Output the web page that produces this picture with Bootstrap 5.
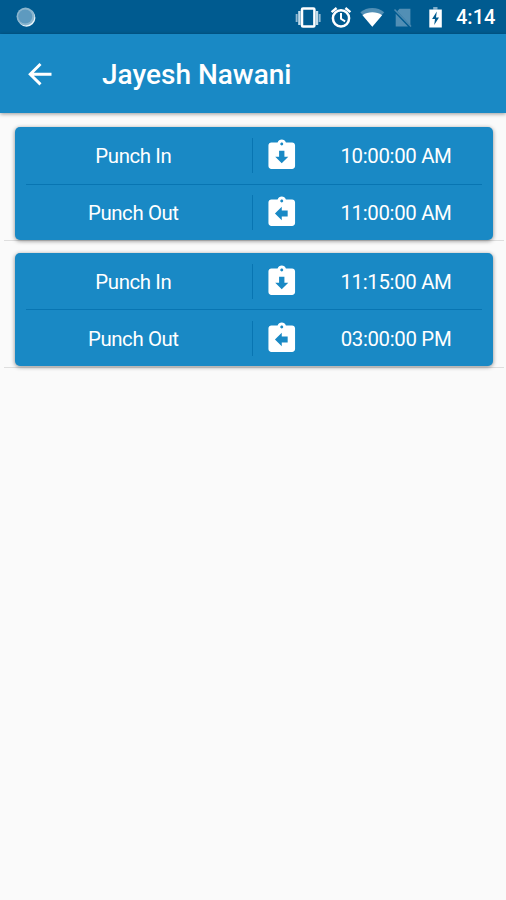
<!DOCTYPE html>
<html lang="en">
<head>
<meta charset="utf-8">
<meta name="viewport" content="width=device-width, initial-scale=1">
<title>Jayesh Nawani</title>
<link href="https://cdn.jsdelivr.net/npm/bootstrap@5.3.0/dist/css/bootstrap.min.css" rel="stylesheet">
<style>
body{background:#fafafa;font-family:Roboto,"Liberation Sans",sans-serif;min-height:900px;overflow:hidden}
.status-bar{height:34px;background:#005b90;padding:0 10px 0 16px}
.status-time{font-size:20px;font-weight:500;line-height:36px;width:40px;margin-left:11px;white-space:nowrap}
.app-bar{height:79px;background:#1989c5;box-shadow:0 1px 4px rgba(0,0,0,.4);padding:0 24px}
.app-title{font-size:28px;font-weight:500;margin-left:46px;line-height:1;padding-top:2px}
.entry-list{padding:14px 2px 0 4px}
.entry{border-bottom:1px solid #dedede;padding:0 11.5px 0 10.5px;margin-bottom:12px;height:114px}
.entry + .entry{height:115px}
.punch-card{height:112.6px;border-radius:5px;background:#1989c5;box-shadow:0 1px 4px rgba(0,0,0,.45);border:0}
.punch-row{height:56.5px;flex-shrink:0}
.punch-row:first-child{height:57px}
.entry:first-child .punch-row + .punch-row{height:57.400px}
.punch-row + .punch-row::before{content:"";height:1px;background:#0875b2;position:absolute;left:11px;right:11px;top:57px}
.entry + .entry .punch-row + .punch-row::before{top:56px}
.punch-label{width:237.6px;font-size:20.4px;letter-spacing:-.4px;padding-top:2px}
.punch-rule{width:1px;height:35px;background:#0875b2}
.punch-icon{width:35.5px;height:35.5px;margin-left:10.7px}
.punch-time{width:193px;font-size:20.4px;letter-spacing:-.33px;padding-top:2px}
</style>
</head>
<body>
<header class="text-white">
  <div class="status-bar d-flex align-items-center justify-content-between">
    <svg width="20" height="20" viewBox="0 0 20 20"><circle cx="10.5" cy="10.8" r="8.9" fill="#e8f5fb"/><circle cx="9.5" cy="9.5" r="9" fill="#8bb5ce"/><circle cx="9.2" cy="9.5" r="7" fill="#5e9abf"/></svg>
    <div class="d-flex align-items-center">
      <svg width="150" height="34" viewBox="295 0 150 34">
        <path d="M295.7 14h1.9v8h-1.9zM318.7 14h1.9v8h-1.9z" fill="#8fb7d1"/>
        <path d="M298.2 11h2.3v14h-2.3zM315.9 11h2.3v14h-2.3z" fill="#c2dbea"/>
        <rect x="302" y="8.4" width="12.4" height="18.2" rx="1" fill="none" stroke="#fff" stroke-width="2.5"/>
        <circle cx="341" cy="18.3" r="8.1" fill="none" stroke="#fff" stroke-width="2.5"/>
        <path d="M331.6 12.2l5-4.2M350.4 12.2l-5-4.2" stroke="#fff" stroke-width="2.4"/>
        <path d="M341 13v5.8l4.1 2.5" fill="none" stroke="#fff" stroke-width="2"/>
        <path d="M360.4 12.2C366.8 6.5 377.8 6.5 384.2 12.2L372.3 26.8z" fill="#528fb5"/>
        <path d="M362.5 15.2C368 11.4 376.6 11.4 382.1 15.2L372.3 26.8z" fill="#fff"/>
        <path d="M399.5 8.8h10.9v16.5L397.2 11.2zM395.7 13.8l12.3 12.6h-12.3z" fill="#528fb5"/>
        <path d="M394.5 9.5l16.5 17" stroke="#4c8ab1" stroke-width="1.5"/>
        <path d="M433.2 7h4.3v2.7h-4.3z" fill="#7faecb"/>
        <path d="M429.3 9.5h12.5v18h-12.5z" fill="#fff"/>
        <path d="M436.8 11.5l-4.7 7.6h2.9l-.8 6 4.8-7.6h-3z" fill="#005b90"/>
      </svg>
      <span class="status-time">4:14</span>
    </div>
  </div>
  <div class="app-bar d-flex align-items-center position-relative">
    <svg width="32" height="32" viewBox="0 0 32 32"><path d="M27.5 16.2H6M16.5 6L6.2 16.2 16.5 26.4" fill="none" stroke="#fff" stroke-width="2.9"/></svg>
    <h1 class="app-title mb-0">Jayesh Nawani</h1>
  </div>
</header>
<svg class="d-none">
  <symbol id="clip-in" viewBox="0 0 24 24"><path fill="#fff" d="M19 3h-4.180C14.400 1.840 13.300 1 12 1c-1.300 0-2.400.840-2.820 2H5c-1.100 0-2 .9-2 2v14c0 1.100.9 2 2 2h14c1.100 0 2-.9 2-2V5c0-1.100-.9-2-2-2zm-7 0c.55 0 1 .45 1 1s-.45 1-1 1-1-.45-1-1 .45-1 1-1zm0 14l-4.400-4.400h2.600V8.700h3.600v3.900h2.600L12 17z"/></symbol>
  <symbol id="clip-out" viewBox="0 0 24 24"><path fill="#fff" d="M19 3h-4.180C14.400 1.840 13.300 1 12 1c-1.300 0-2.400.840-2.820 2H5c-1.100 0-2 .9-2 2v14c0 1.100.9 2 2 2h14c1.100 0 2-.9 2-2V5c0-1.100-.9-2-2-2zm-7 0c.55 0 1 .45 1 1s-.45 1-1 1-1-.45-1-1 .45-1 1-1zm4 11.500h-4v2.600L7.400 12.500 12 7.900v2.600h4v4z"/></symbol>
</svg>
<main class="entry-list">
  <section class="entry">
    <div class="card punch-card text-white">
      <div class="punch-row d-flex align-items-center"><span class="punch-label text-center">Punch In</span><span class="punch-rule"></span><svg class="punch-icon"><use href="#clip-in"/></svg><span class="punch-time text-center ms-auto">10:00:00 AM</span></div>
      <div class="punch-row d-flex align-items-center"><span class="punch-label text-center">Punch Out</span><span class="punch-rule"></span><svg class="punch-icon"><use href="#clip-out"/></svg><span class="punch-time text-center ms-auto">11:00:00 AM</span></div>
    </div>
  </section>
  <section class="entry">
    <div class="card punch-card text-white">
      <div class="punch-row d-flex align-items-center"><span class="punch-label text-center">Punch In</span><span class="punch-rule"></span><svg class="punch-icon"><use href="#clip-in"/></svg><span class="punch-time text-center ms-auto">11:15:00 AM</span></div>
      <div class="punch-row d-flex align-items-center"><span class="punch-label text-center">Punch Out</span><span class="punch-rule"></span><svg class="punch-icon"><use href="#clip-out"/></svg><span class="punch-time text-center ms-auto">03:00:00 PM</span></div>
    </div>
  </section>
</main>
<script src="https://cdn.jsdelivr.net/npm/bootstrap@5.3.0/dist/js/bootstrap.bundle.min.js"></script>
</body>
</html>
